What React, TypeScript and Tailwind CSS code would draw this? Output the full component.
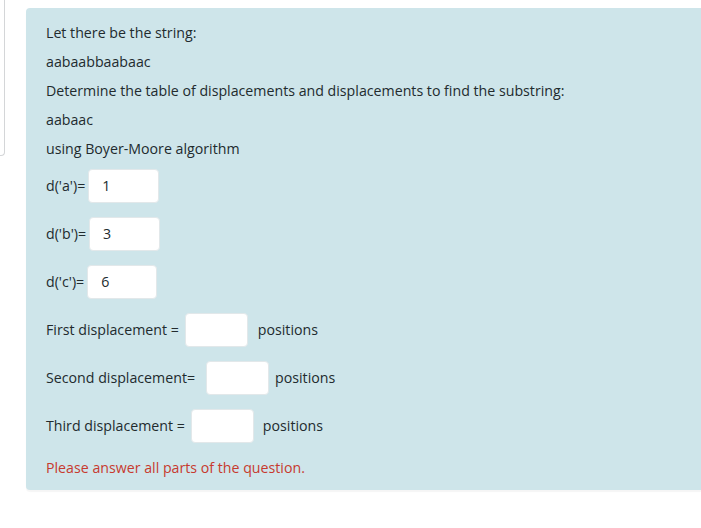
export default function App() {
  const font = { fontFamily: '"Open Sans", "Noto Sans", sans-serif' };
  return (
    <div className="flex min-h-[528px] w-[701px] bg-white text-[14.2px] text-[#222b2e]" style={font}>
      <div className="h-[156px] w-[5px] shrink-0 rounded-br-sm border-r border-b border-[#d4d6d8]" />
      <div className="ml-[21px] mt-2 h-[482px] flex-1 rounded-l-[4px] bg-[#cee5ea] pl-5 pt-[14px] shadow-[0_2px_1px_rgba(0,0,0,0.04)]">
        <p className="mb-2 leading-[21px]">Let there be the string:</p>
        <p className="mb-2 leading-[21px]">aabaabbaabaac</p>
        <p className="mb-2 leading-[21px]">
          Determine the table of displacements and displacements to find the substring:
        </p>
        <p className="mb-2 leading-[21px]">aabaac</p>
        <p className="mb-[10px] leading-[21px]">using Boyer-Moore algorithm</p>

        <div className="flex flex-col gap-[14px]">
          <Row label="d('a')=" value="1" width="w-[71px]" gap="ml-[3px]" />
          <Row label="d('b')=" value="3" width="w-[71px]" gap="ml-[3px]" />
          <Row label="d('c')=" value="6" width="w-[70px]" gap="ml-[3px]" />
          <Row label="First displacement =" width="w-[63px]" gap="ml-[6px]" after="ml-[10px]" />
          <Row label="Second displacement=" width="w-[63px]" gap="ml-[11px]" after="ml-[6px]" />
          <Row label="Third displacement =" width="w-[63px]" gap="ml-[6px]" after="ml-[9px]" />
        </div>

        <p className="mt-[14px] leading-[21px] text-[#c73a2e]">Please answer all parts of the question.</p>
      </div>
    </div>
  );
}

function Row({
  label,
  value,
  width,
  gap,
  after,
}: {
  label: string;
  value?: string;
  width: string;
  gap: string;
  after?: string;
}) {
  return (
    <div className="flex h-[34px] items-center">
      <span className="whitespace-nowrap">{label}</span>
      <div
        className={`${gap} ${width} flex h-[34px] items-center rounded-[4px] border border-[#e2e8ea] bg-white pl-[13px]`}
      >
        {value}
      </div>
      {after ? <span className={after}>positions</span> : null}
    </div>
  );
}
